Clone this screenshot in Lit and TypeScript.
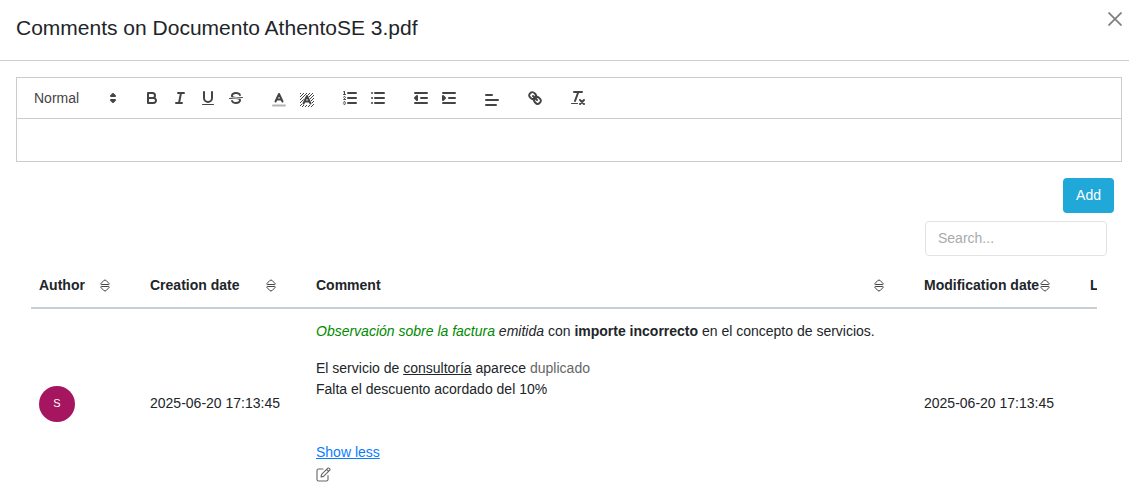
import { LitElement, html, css, svg } from "lit";
import { customElement, property } from "lit/decorators.js";

const hatch = [-15, -12, -9, -6, -3, 0, 3, 6, 9, 12].map(
  (n) => svg`<path class="hair" d="M${1 + n},17L${15 + n},3"/>`
);

const ICONS: Record<string, unknown> = {
  bold: svg`<path d="M5,4H9.5A2.5,2.5,0,0,1,12,6.5v0A2.5,2.5,0,0,1,9.5,9H5V4Z"/><path d="M5,9h5.5A2.5,2.5,0,0,1,13,11.5v0A2.5,2.5,0,0,1,10.5,14H5V9Z"/>`,
  italic: svg`<path d="M7,4H13M5,14H11M8,14L10,4"/>`,
  underline: svg`<path d="M5,3V9a4.012,4.012,0,0,0,4,4H9a4.012,4.012,0,0,0,4-4V3"/><rect class="fill" height="1" rx="0.5" width="12" x="3" y="15"/>`,
  strike: svg`<path class="thin" d="M15.5,8.5L2.5,9.5"/><path class="fill" d="M9.007,8C6.542,7.791,6,7.519,6,6.5,6,5.792,7.283,5,9,5c1.571,0,2.765.679,2.969,1.309a1,1,0,0,0,1.9-.617C13.356,4.106,11.354,3,9,3,6.2,3,4,4.538,4,6.5a3.2,3.2,0,0,0,.5,1.843Z"/><path class="fill" d="M8.984,10C11.457,10.208,12,10.479,12,11.5c0,0.708-1.283,1.5-3,1.5-1.571,0-2.765-.679-2.969-1.309a1,1,0,1,0-1.9.617C4.644,13.894,6.646,15,9,15c2.8,0,5-1.538,5-3.5a3.2,3.2,0,0,0-.5-1.843Z"/>`,
  color: svg`<path class="faint" d="M3,16.5H15"/><path d="M5.5,12.5L9,5L12.5,12.5M6.4,10.5H11.6"/>`,
  background: svg`<defs><clipPath id="box"><rect x="2" y="3" width="14" height="14"/></clipPath></defs><g clip-path="url(#box)" transform="translate(0 1)">${hatch}</g><path class="halo" d="M5.5,14.5L9,7L12.5,14.5Z"/><path d="M5.5,14.5L9,7L12.5,14.5M6.4,12.5H11.6"/>`,
  ordered: svg`<path d="M7,4H15M7,9H15M7,14H15"/><path class="thin" d="M2.5,5.5H4.5"/><path class="fill" d="M3.5,6A0.5,0.5,0,0,1,3,5.5V3.085l-0.276.138A0.5,0.5,0,0,1,2.053,3c-0.124-.247-0.023-0.324.224-0.447l1-.5A0.5,0.5,0,0,1,4,2.5v3A0.5,0.5,0,0,1,3.5,6Z"/><path class="thin" d="M4.5,10.5h-2c0-.234,1.85-1.076,1.85-2.234A0.959,0.959,0,0,0,2.5,8.156"/><path class="thin" d="M2.5,14.846a0.959,0.959,0,0,0,1.85-.109A0.7,0.7,0,0,0,3.75,14a0.688,0.688,0,0,0,.6-0.736,0.959,0.959,0,0,0-1.85-.109"/>`,
  bullet: svg`<path d="M6,4H15M6,9H15M6,14H15M3,4h.01M3,9h.01M3,14h.01"/>`,
  outdent: svg`<path d="M3,14H15M3,4H15M9,9H15"/><path class="solid" d="M5,7V11L3,9Z"/>`,
  indent: svg`<path d="M3,14H15M3,4H15M9,9H15"/><path class="solid" d="M3,7V11L5,9Z"/>`,
  align: svg`<path d="M3,11H15M3,16H13M3,6H9"/>`,
  link: svg`<path d="M7,7L11,11"/><path d="M8.9,4.577a3.476,3.476,0,0,1,.36,4.679A3.476,3.476,0,0,1,4.577,8.9C3.185,7.5,2.035,6.4,4.217,4.217S7.5,3.185,8.9,4.577Z"/><path d="M13.423,9.1a3.476,3.476,0,0,0-4.679-.36,3.476,3.476,0,0,0,.36,4.679c1.392,1.392,2.5,2.542,4.679.36S14.815,10.5,13.423,9.1Z"/>`,
  clean: svg`<path d="M5,3H13M6,12L9.35,3M11,11L15,15M15,11L11,15"/><rect class="fill" height="1" rx="0.5" width="7" x="2" y="14"/>`,
  picker: svg`<path class="solid" d="M7,11L9,13L11,11ZM7,7L9,5L11,7Z"/>`,
};

const GROUPS: [string, string][][] = [
  [["bold", "Bold"], ["italic", "Italic"], ["underline", "Underline"], ["strike", "Strikethrough"]],
  [["color", "Text colour"], ["background", "Background colour"]],
  [["ordered", "Numbered list"], ["bullet", "Bulleted list"]],
  [["outdent", "Decrease indent"], ["indent", "Increase indent"]],
  [["align", "Alignment"]],
  [["link", "Link"]],
  [["clean", "Clear formatting"]],
];

@customElement("editor-icon")
export class EditorIcon extends LitElement {
  @property() name = "";

  static styles = css`
    :host { display: block; width: 18px; height: 18px; }
    svg { display: block; width: 18px; height: 18px; overflow: hidden; }
    path { fill: none; stroke: #444; stroke-width: 2; stroke-linecap: round; stroke-linejoin: round; }
    .thin { stroke-width: 1; }
    .hair { stroke-width: 1; stroke-linecap: butt; }
    .faint { opacity: 0.4; }
    .halo { fill: #fff; stroke: #fff; stroke-width: 3; }
    .solid { fill: #444; }
    .fill { fill: #444; stroke: none; }
  `;

  render() {
    return html`<svg viewBox="0 0 18 18" aria-hidden="true">${ICONS[this.name]}</svg>`;
  }
}

@customElement("comment-editor")
export class CommentEditor extends LitElement {
  static styles = css`
    :host { display: block; border: 1px solid #ccc; }
    .toolbar { display: flex; flex-wrap: wrap; column-gap: 15px; padding: 8px; border-bottom: 1px solid #ccc; }
    .group { display: flex; }
    button { width: 28px; height: 24px; padding: 3px 5px; border: 0; background: none; cursor: pointer; }
    .picker { display: grid; box-sizing: border-box; width: 98px; height: 24px; padding-right: 1px; align-items: center; }
    .picker > * { grid-area: 1 / 1; }
    select { width: 100%; height: 24px; padding: 0 0 0 9px; border: 0; appearance: none; background: none; color: #444; font: 14px/24px "Liberation Sans", Arial, sans-serif; }
    editor-icon { pointer-events: none; }
    .picker editor-icon { justify-self: end; }
    textarea { display: block; box-sizing: border-box; width: 100%; height: 42px; padding: 12px 15px; border: 0; outline: 0; resize: none; background: none; font: 13px/18px "Liberation Sans", Arial, sans-serif; }
  `;

  render() {
    return html`
      <div class="toolbar">
        <div class="picker">
          <select aria-label="Text style"><option>Normal</option></select>
          <editor-icon name="picker"></editor-icon>
        </div>
        ${GROUPS.map(
          (group) => html`<div class="group">
            ${group.map(
              ([name, label]) => html`<button type="button" aria-label=${label}><editor-icon name=${name}></editor-icon></button>`
            )}
          </div>`
        )}
      </div>
      <textarea aria-label="Comment"></textarea>
    `;
  }
}

@customElement("app-root")
export class AppRoot extends LitElement {
  static styles = css`
    :host { display: block; height: 100vh; overflow: hidden; background: #fff; color: #212529; font: 14px/21px "Liberation Sans", Arial, sans-serif; }
    header { display: flex; justify-content: space-between; align-items: flex-start; padding: 12px 7px 16px 16px; border-bottom: 1px solid #c8ced3; }
    h1 { margin: 0; font-size: 21px; line-height: 32px; font-weight: 400; }
    button { font: inherit; border: 0; cursor: pointer; }
    .close { padding: 0; background: none; }
    .close svg { display: block; width: 14px; height: 14px; }
    main { padding: 16px 7px 0 16px; }
    .actions { display: flex; justify-content: flex-end; padding: 16px 8px 8px 0; }
    .add { height: 35px; padding: 0 13px; border-radius: 4px; background: #20a8d8; color: #fff; }
    .search { display: flex; justify-content: flex-end; padding-right: 15px; }
    input { box-sizing: border-box; width: 182px; height: 35px; padding: 0 12px 2px; border: 1px solid #e1e3e6; border-radius: 4px; font: inherit; }
    input::placeholder { color: #aaa; opacity: 1; }
    .scroller { overflow: hidden; margin: 8px 25px 0 15px; }
    table { width: 100%; table-layout: fixed; border-collapse: separate; border-spacing: 0; }
    th { padding: 11px 8px; border-bottom: 2px solid #c8ced3; text-align: left; white-space: nowrap; }
    td { padding: 12px 8px; vertical-align: middle; white-space: nowrap; }
    .author { width: 95px; }
    .created { width: 150px; }
    .modified { width: 150px; }
    .more { width: 0; padding-right: 7px; }
    .head { display: flex; align-items: center; justify-content: space-between; padding-right: 24px; }
    .sort { padding: 0; background: none; }
    .sort svg { display: block; width: 10px; height: 13px; }
    .avatar { display: flex; align-items: center; justify-content: center; width: 36px; height: 36px; border-radius: 50%; background: #a6155f; color: #fff; font-size: 11px; }
    p { margin: 0 0 16px; }
    .body { padding-bottom: 26px; }
    .green { color: #008a00; }
    .gray { color: #666; }
    a { color: #0a7cff; text-decoration: underline; }
    .edit { display: block; margin: 4px 0; padding: 0; background: none; }
    .edit svg { display: block; width: 15px; height: 15px; }
  `;

  private heading(label: string, cls: string) {
    return html`<th class=${cls} scope="col">
      <div class="head">
        <span>${label}</span>
        <button class="sort" type="button" aria-label="Sort by ${label}">
          <svg viewBox="0 0 10 13" fill="none" stroke="#444" stroke-linejoin="round" aria-hidden="true">
            <path d="M1.2 5.5Q.4 5.3 1 4.5L3.8 1.5Q5 .5 6.2 1.5L9 4.5Q9.6 5.3 8.8 5.5ZM1.2 7.5Q.4 7.7 1 8.5L3.8 11.5Q5 12.5 6.2 11.5L9 8.5Q9.6 7.7 8.8 7.5Z" />
          </svg>
        </button>
      </div>
    </th>`;
  }

  render() {
    return html`
      <header>
        <h1>Comments on Documento AthentoSE 3.pdf</h1>
        <button class="close" type="button" aria-label="Close">
          <svg viewBox="0 0 14 14" stroke="#808080" stroke-width="1.8" aria-hidden="true"><path d="M.5.5 13.5 13.5M13.5.5.5 13.5" /></svg>
        </button>
      </header>
      <main>
        <comment-editor></comment-editor>
        <div class="actions"><button class="add" type="button">Add</button></div>
        <div class="search"><input type="search" aria-label="Search comments" placeholder="Search..." /></div>
        <div class="scroller">
          <table>
            <thead>
              <tr>
                ${this.heading("Author", "author")}${this.heading("Creation date", "created")}${this.heading("Comment", "comment")}${this.heading("Modification date", "modified")}
                <th class="more" scope="col">L</th>
              </tr>
            </thead>
            <tbody>
              <tr>
                <td><div class="avatar">S</div></td>
                <td>2025-06-20 17:13:45</td>
                <td>
                  <div class="body">
                    <p><em><span class="green">Observación sobre la factura</span> emitida</em> con <strong>importe incorrecto</strong> en el concepto de servicios.</p>
                    <p>El servicio de <u>consultoría</u> aparece <span class="gray">duplicado</span><br />Falta el descuento acordado del 10%</p>
                  </div>
                  <a href="#">Show less</a>
                  <button class="edit" type="button" aria-label="Edit comment">
                    <svg viewBox="0 0 15 15" fill="none" stroke="#666" stroke-width="1.1" stroke-linejoin="round" stroke-linecap="round" aria-hidden="true">
                      <path d="M7 2H2.6Q1 2 1 3.6V12.4Q1 14 2.6 14H10.4Q12 14 12 12.4V8.5M5 10 5.6 7.4 11.8 1.2Q12.4.7 13 1.2L13.8 2Q14.3 2.6 13.8 3.2L7.6 9.4ZM10.6 2.4 12.6 4.4" />
                    </svg>
                  </button>
                </td>
                <td>2025-06-20 17:13:45</td>
                <td></td>
              </tr>
            </tbody>
          </table>
        </div>
      </main>
    `;
  }
}
